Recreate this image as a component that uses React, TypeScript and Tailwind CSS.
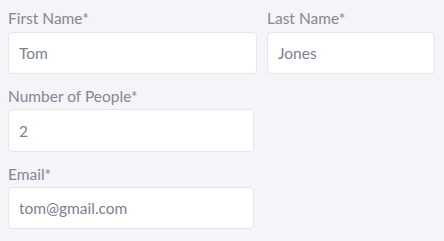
import React from "react";

function Field({
  label,
  value,
  width,
  labelGap = "mb-1",
  height = "h-[42px]",
}: {
  label: string;
  value: string;
  width: string;
  labelGap?: string;
  height?: string;
}) {
  return (
    <div className="flex flex-col">
      <label className={`${labelGap} text-[15.5px] leading-5 text-[#838891]`}>{label}</label>
      <input
        readOnly
        value={value}
        className={`${width} ${height} rounded-[4px] border border-[#e5e5eb] bg-white px-[10px] text-[15.5px] text-[#7a8190] outline-none`}
      />
    </div>
  );
}

export default function App() {
  return (
    <div
      className="min-h-screen bg-[#f4f4f9] px-2 pt-2"
      style={{ fontFamily: "Lato, 'Open Sans', sans-serif" }}
    >
      <div className="flex flex-col gap-3">
        <div className="flex gap-[10px]">
          <Field label="First Name*" value="Tom" width="w-[249px]" />
          <Field label="Last Name*" value="Jones" width="w-[168px]" />
        </div>
        <Field label="Number of People*" value="2" width="w-[246px]" labelGap="mb-[3px]" height="h-[43px]" />
        <Field label="Email*" value="tom@gmail.com" width="w-[246px]" labelGap="mb-[3px]" />
      </div>
    </div>
  );
}
